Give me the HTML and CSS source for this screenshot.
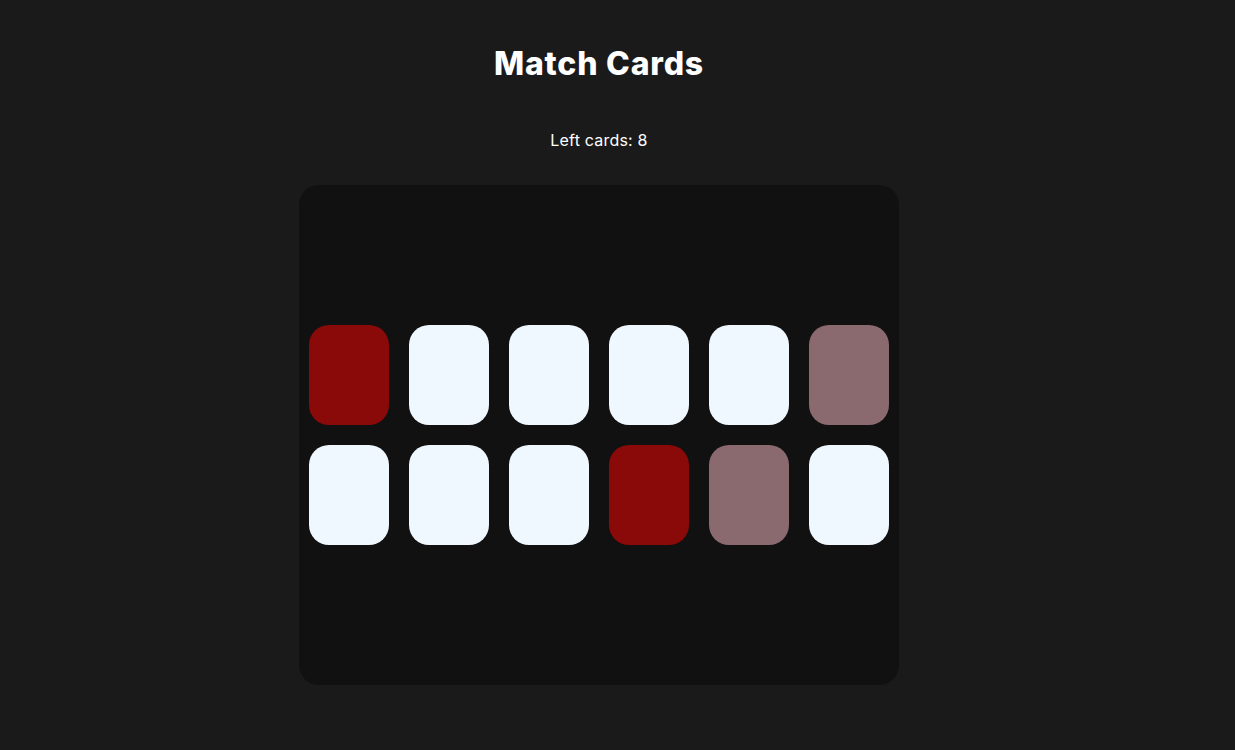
FILE: index.html
```html
<!DOCTYPE html>
<html lang="en">
<head>
<meta charset="utf-8">
<title>Match Cards</title>
<link rel="stylesheet" href="styles.css">
</head>
<body>
<main class="app">
  <h1 class="title">Match Cards</h1>
  <p class="counter">Left cards: 8</p>
  <section class="board">
    <div class="grid">
      <div class="card card-red"></div>
      <div class="card"></div>
      <div class="card"></div>
      <div class="card"></div>
      <div class="card"></div>
      <div class="card card-mauve"></div>
      <div class="card"></div>
      <div class="card"></div>
      <div class="card"></div>
      <div class="card card-red"></div>
      <div class="card card-mauve"></div>
      <div class="card"></div>
    </div>
  </section>
</main>
</body>
</html>
```

FILE: styles.css
```css
html, body {
  margin: 0;
  padding: 0;
  background: #1a1a1a;
}
body {
  font-family: "Inter", "Open Sans", sans-serif;
  color: #ffffff;
}
.app {
  display: flex;
  flex-direction: column;
  align-items: center;
  padding-right: 37px;
}
.title {
  margin: 40px 0 0;
  font-size: 32px;
  line-height: 48px;
  font-weight: 800;
  letter-spacing: 0.8px;
}
.counter {
  margin: 40px 0 0;
  font-size: 16px;
  line-height: 24px;
  font-weight: 400;
  letter-spacing: 0.2px;
}
.board {
  margin-top: 33px;
  width: 600px;
  height: 500px;
  box-sizing: border-box;
  padding: 10px;
  background: #111111;
  border-radius: 20px;
  display: flex;
  align-items: center;
  justify-content: center;
}
.grid {
  display: grid;
  grid-template-columns: repeat(6, 80px);
  grid-auto-rows: 100px;
  gap: 20px;
}
.card {
  background: #f0f8ff;
  border-radius: 20px;
}
.card-red {
  background: #8a0909;
}
.card-mauve {
  background: #8a6a6f;
}
```
